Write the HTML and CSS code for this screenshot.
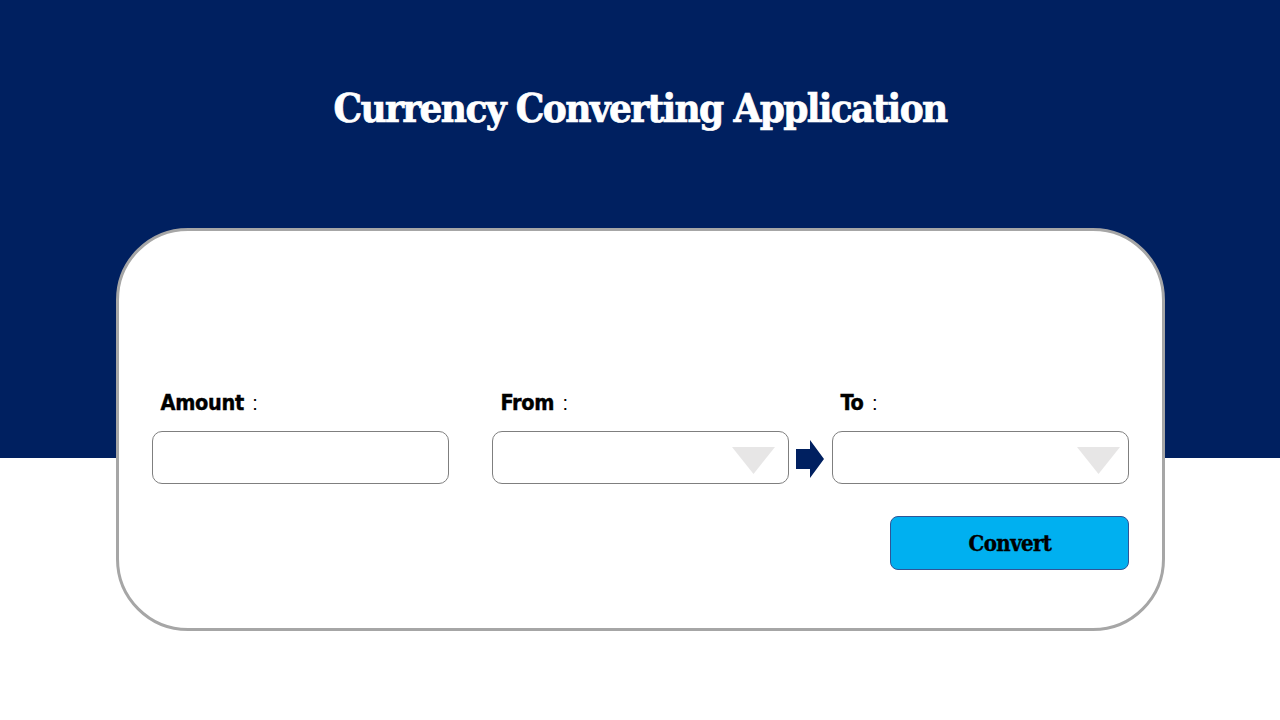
FILE: index.html
```html
<!DOCTYPE html>
<html lang="en">
<head>
<meta charset="utf-8">
<title>Currency Converting Application</title>
<link rel="stylesheet" href="styles.css">
</head>
<body>
<div class="page">
  <h1 class="title">Currency Converting Application</h1>
  <section class="card">
    <div class="fields">
      <label class="label">Amount <span class="colon">:</span></label>
      <span></span>
      <label class="label">From <span class="colon">:</span></label>
      <span></span>
      <label class="label">To <span class="colon">:</span></label>

      <div class="box"></div>
      <span></span>
      <div class="box select">
        <svg class="caret" width="43" height="27" viewBox="0 0 43 27"><polygon points="0,0 43,0 21.5,27" fill="#e7e6e6"/></svg>
      </div>
      <div class="arrow-cell">
        <svg width="28" height="38" viewBox="0 0 28 38"><polygon points="0,9 14,9 14,0 28,19 14,38 14,29 0,29" fill="#002060"/></svg>
      </div>
      <div class="box select select-right">
        <svg class="caret" width="43" height="27" viewBox="0 0 43 27"><polygon points="0,0 43,0 21.5,27" fill="#e7e6e6"/></svg>
      </div>
    </div>
    <div class="actions">
      <button class="convert">Convert</button>
    </div>
  </section>
</div>
</body>
</html>
```

FILE: styles.css
```css
html, body {
  margin: 0;
  padding: 0;
}
body {
  width: 1280px;
  height: 720px;
  overflow: hidden;
  background: #ffffff;
}
.page {
  height: 720px;
  background: linear-gradient(to bottom, #002060 0, #002060 458px, #ffffff 458px, #ffffff 100%);
  display: flex;
  flex-direction: column;
  align-items: center;
}
.title {
  margin: 83px 0 0 0;
  height: 50px;
  line-height: 50px;
  color: #ffffff;
  font-family: "DejaVu Serif Condensed", "DejaVu Serif", "Liberation Serif", serif;
  font-weight: 900;
  font-size: 40px;
  letter-spacing: -1.65px;
  text-align: center;
  -webkit-text-stroke: 0.7px #ffffff;
}
.card {
  margin: 95px 0 0 0;
  width: 977px;
  padding: 158px 33px 58px 33px;
  background: #ffffff;
  border: 3px solid #a6a6a6;
  border-radius: 72px;
}
.fields {
  display: grid;
  grid-template-columns: 297px 43px 297px 43px 297px;
  grid-template-rows: 30px 53px;
  row-gap: 12px;
}
.label {
  padding-left: 9px;
  font-family: "DejaVu Sans Condensed", "Liberation Sans", sans-serif;
  font-weight: bold;
  font-size: 21.5px;
  line-height: 28px;
  color: #000000;
  -webkit-text-stroke: 0.4px #000000;
  letter-spacing: -0.3px;
}
.colon {
  font-family: "Liberation Sans", sans-serif;
  font-weight: normal;
  font-size: 20px;
  padding-left: 2px;
  -webkit-text-stroke: 0;
}
.box {
  box-sizing: border-box;
  height: 53px;
  border: 1px solid #7f7f7f;
  border-radius: 10px;
  background: #ffffff;
}
.select {
  display: flex;
  align-items: flex-start;
  justify-content: flex-end;
  padding: 15px 13px 0 0;
}
.select-right {
  padding-right: 8px;
}
.caret {
  display: block;
}
.arrow-cell {
  display: flex;
  align-items: center;
  justify-content: center;
}
.arrow-cell svg {
  display: block;
  margin-left: -1px;
  margin-top: 2px;
}
.actions {
  display: flex;
  justify-content: flex-end;
  margin-top: 32px;
}
.convert {
  box-sizing: border-box;
  width: 239px;
  height: 54px;
  background: #00b0f0;
  border: 1px solid #2f5597;
  border-radius: 8px;
  color: #000000;
  font-family: "DejaVu Serif Condensed", "DejaVu Serif", "Liberation Serif", serif;
  font-weight: bold;
  font-size: 22px;
  letter-spacing: -0.6px;
  -webkit-text-stroke: 0.4px #000000;
  padding: 0 0 0 2px;
  cursor: pointer;
}
```
